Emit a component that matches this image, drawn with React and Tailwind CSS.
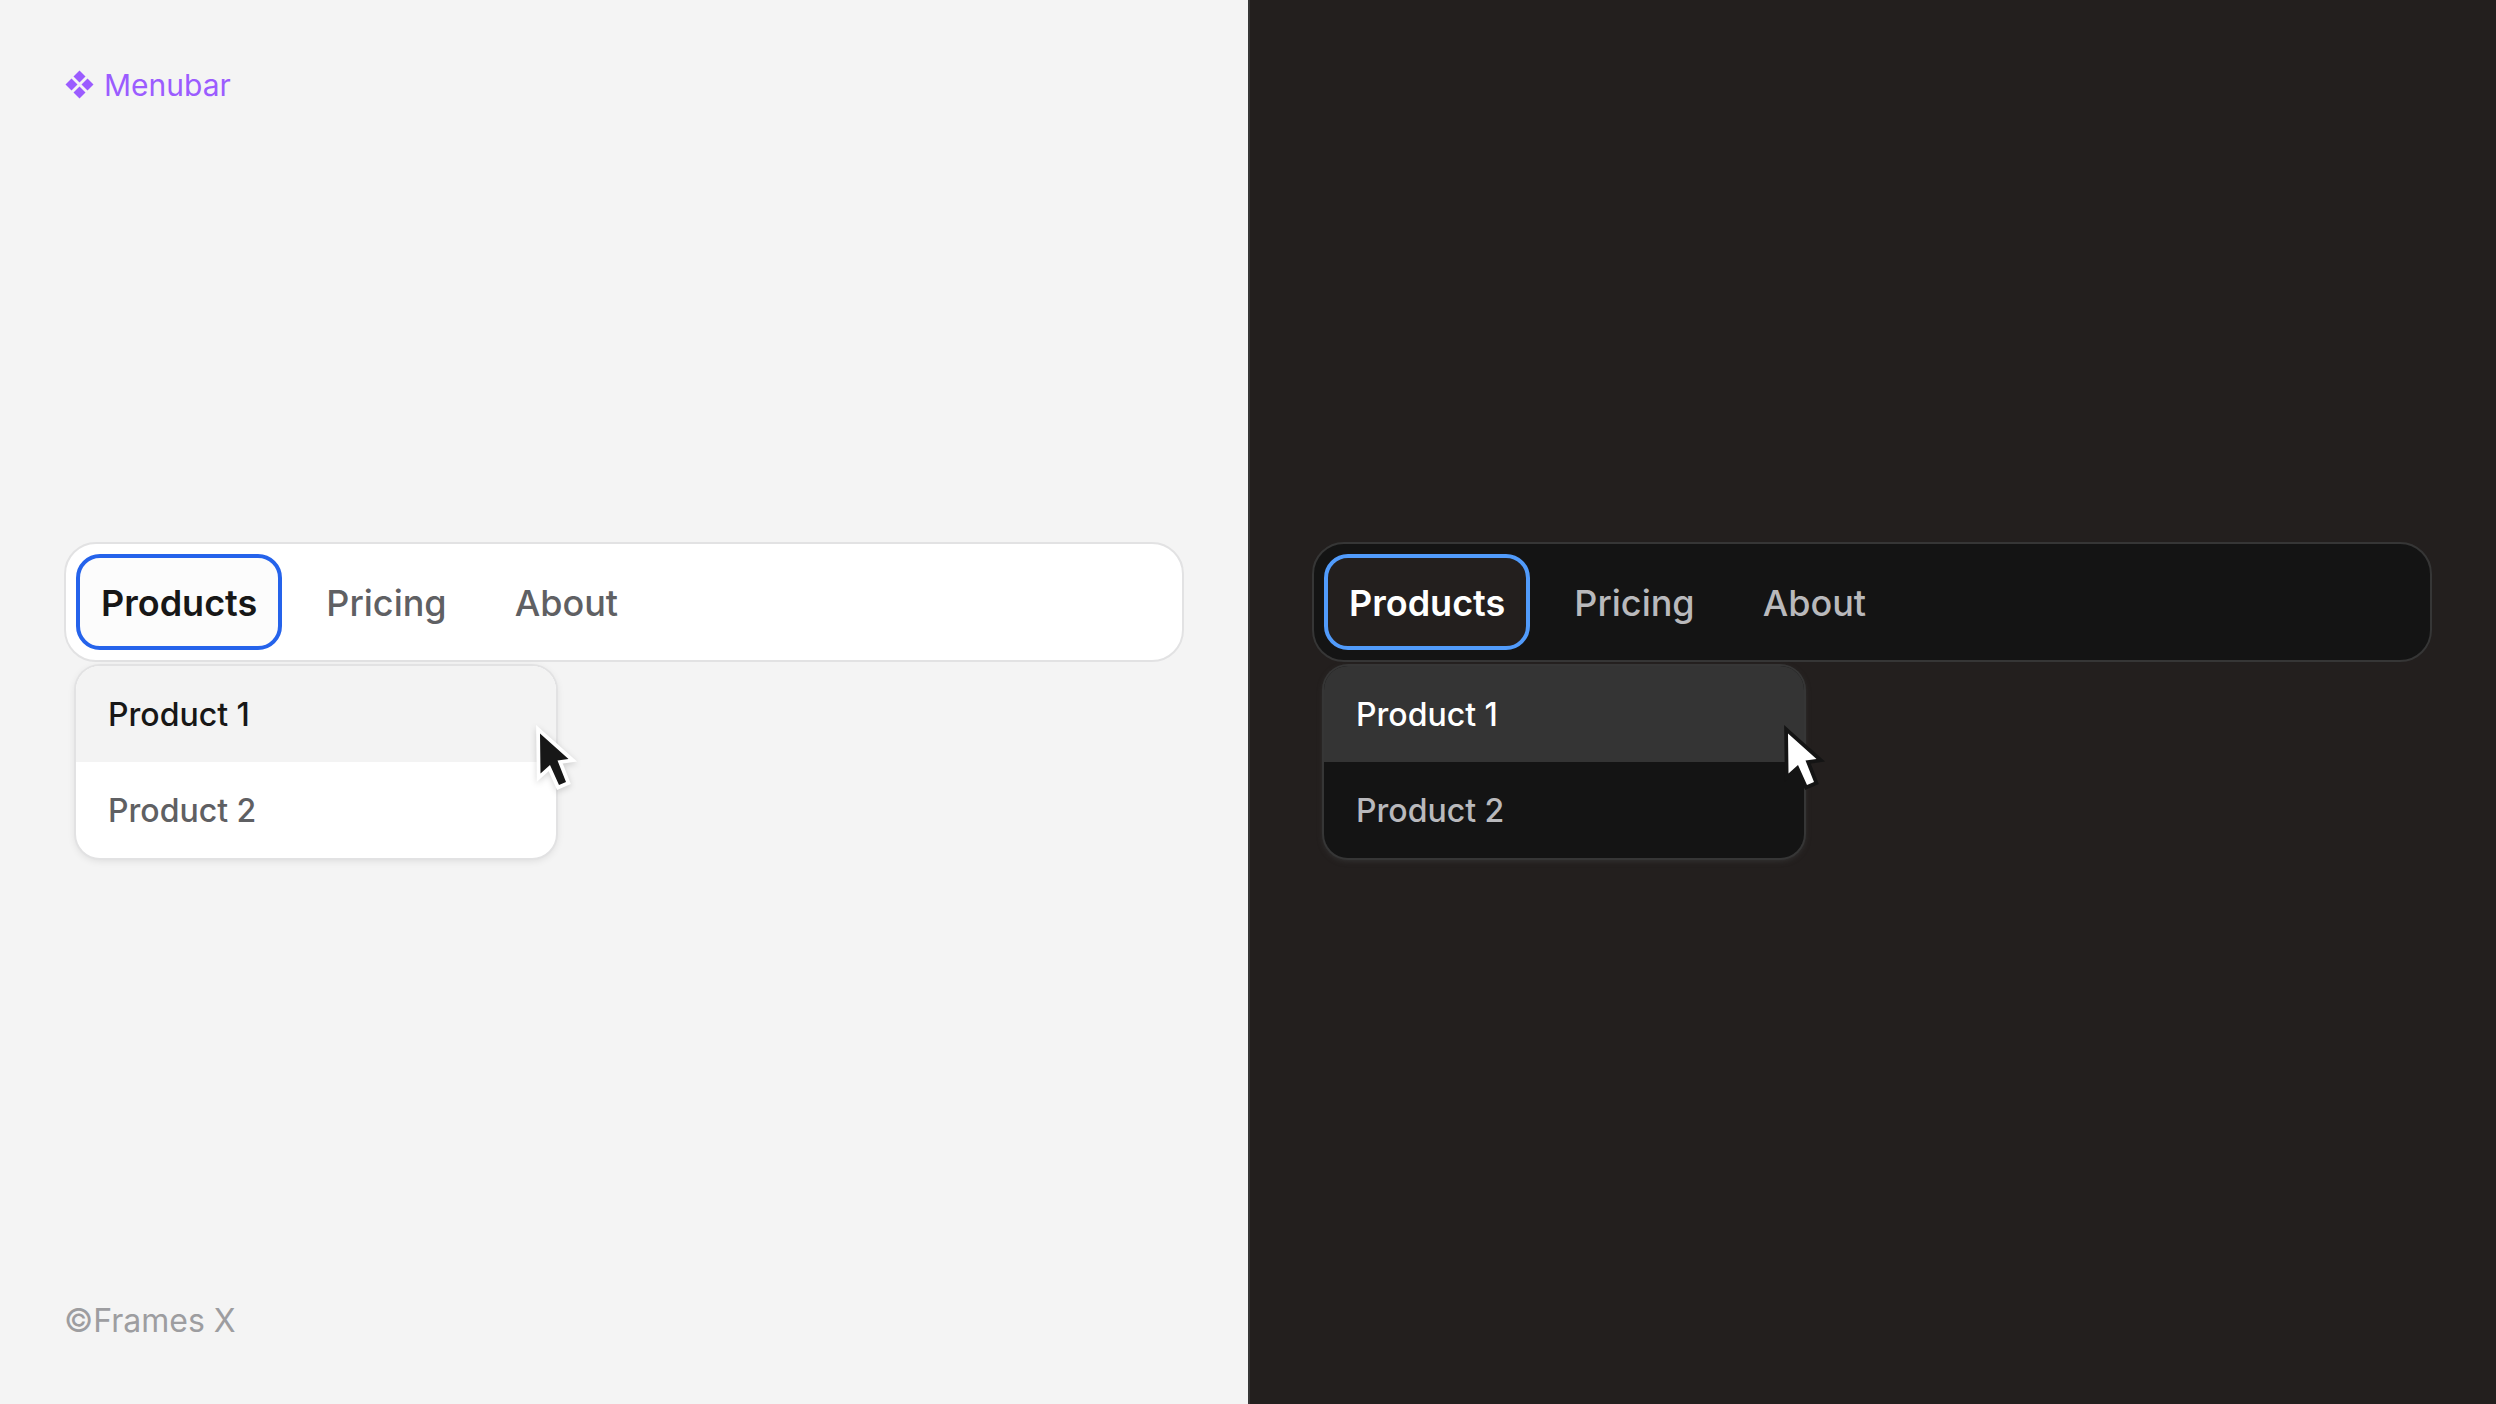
import React from "react";
import clsx from "clsx";


const Cursor = ({ dark }) => {
    return (
        <svg
            viewBox="0 0 64 84"
            aria-hidden="true"
            className={clsx(
                "pointer-events-none absolute -right-8 top-12 h-[84px] w-16",
                dark
                    ? "fill-white stroke-[#141414]"
                    : "fill-[#171717] stroke-white drop-shadow-[0_2px_3px_rgba(0,0,0,0.16)]"
            )}
        >
            <path
                d="M16 19.5 L44.5 45 L33.5 46.5 L42 68 L35 71 L26 51 L16.5 59.5 Z"
                strokeWidth="7.5"
                strokeLinejoin="miter"
                paintOrder="stroke"
            />
        </svg>
    )
}

const Menubar = ({ dark }) => {
    const muted = dark ? "text-[#b9b9bc]" : "text-[#5f6063]";
    const strong = dark ? "text-white" : "text-[#171717]";

    return (
        <div>
            <nav
                className={clsx(
                    "flex gap-5 rounded-[32px] border-2 p-[10px] text-4xl/[50px]",
                    dark ? "border-[#363636] bg-[#141414]" : "border-[#e2e2e3] bg-white"
                )}
            >
                <button
                    type="button"
                    aria-expanded="true"
                    className={clsx(
                        "rounded-3xl border-4 px-[21px] pt-5 pb-[18px] font-semibold",
                        strong,
                        dark ? "border-[#519bfb] bg-[#231f1e]" : "border-[#2563eb] bg-[#fcfcfc]"
                    )}
                >
                    Products
                </button>
                <button type="button" className={clsx("px-6 pt-6 pb-[22px] font-medium", muted)}>Pricing</button>
                <button type="button" className={clsx("px-6 pt-6 pb-[22px] font-medium", muted)}>About</button>
            </nav>

            <div className="relative my-1 ml-3 w-[480px]">
                <div
                    role="menu"
                    className={clsx(
                        "flex flex-col overflow-hidden rounded-3xl text-[32px]/[50px] font-medium",
                        dark
                            ? "bg-[#141414] shadow-[0_0_0_2px_#363636,0_2px_6px_#3a3a3a]"
                            : "bg-white shadow-[0_0_0_2px_#e2e2e3,0_2px_8px_rgba(0,0,0,0.12)]"
                    )}
                >
                    <button
                        type="button"
                        role="menuitem"
                        className={clsx("px-8 pt-6 pb-[22px] text-left", strong, dark ? "bg-[#343434]" : "bg-[#f3f3f3]")}
                    >
                        Product 1
                    </button>
                    <button type="button" role="menuitem" className={clsx("px-8 pt-6 pb-[22px] text-left", muted)}>
                        Product 2
                    </button>
                </div>
                <Cursor dark={dark} />
            </div>
        </div>
    )
}

const App = () => {
    return (
        <div className="grid min-h-screen grid-cols-2 font-['Inter',sans-serif]">
            <section className="flex flex-col justify-between bg-[#f4f4f4] p-16">
                <h1 className="flex items-center gap-2 text-3xl/[42px] text-[#9b5cff]">
                    <svg viewBox="0 0 32 32" className="size-8 fill-current" aria-hidden="true">
                        <path d="M15.5 1.5 L21.5 7.5 L15.5 13.5 L9.5 7.5 Z" />
                        <path d="M7.5 9.5 L13.5 15.5 L7.5 21.5 L1.5 15.5 Z" />
                        <path d="M23.5 9.5 L29.5 15.5 L23.5 21.5 L17.5 15.5 Z" />
                        <path d="M15.5 17.5 L21.5 23.5 L15.5 29.5 L9.5 23.5 Z" />
                    </svg>
                    Menubar
                </h1>
                <Menubar />
                <p className="pt-1 text-[32px]/[38px] text-[#9d9da0]">©Frames X</p>
            </section>

            <section className="flex flex-col justify-center bg-[#231f1e] p-16 shadow-[inset_2px_0_0_#363636]">
                <Menubar dark />
            </section>
        </div>
    )
}

export default App;
